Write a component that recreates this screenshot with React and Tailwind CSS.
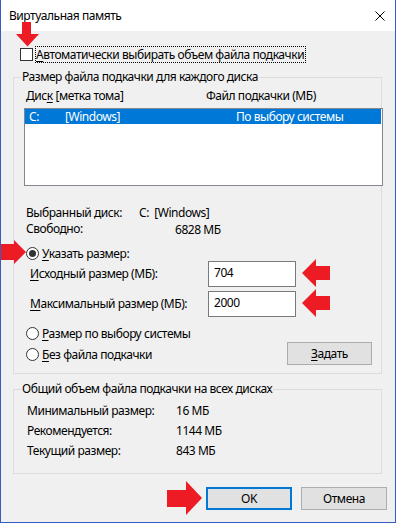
import React from "react";

const font = { fontFamily: '"Noto Sans", "Open Sans", sans-serif' };

function U({ children }) {
  return <span className="underline underline-offset-2">{children}</span>;
}

function Radio({ checked }) {
  return (
    <span className="w-[13px] h-[13px] rounded-full border border-[#333] bg-white flex items-center justify-center shrink-0">
      {checked && <span className="w-[7px] h-[7px] rounded-full bg-[#333]" />}
    </span>
  );
}

function Arrow({ className, points, w, h }) {
  return (
    <svg className={"absolute " + className} width={w} height={h} viewBox={`0 0 ${w} ${h}`}>
      <polygon points={points} fill="#ed1c24" />
    </svg>
  );
}

export default function App() {
  return (
    <div
      className="relative w-[396px] h-[523px] bg-[#f0f0f0] border-l border-r border-b border-[#3b5bc4] text-[12px] tracking-[-0.45px] text-black overflow-hidden"
      style={font}
    >
      {/* Title bar */}
      <div className="h-[31px] bg-white flex items-center justify-between pl-[8px] pr-[10px]">
        <span className="text-[12px]">Виртуальная память</span>
        <svg width="10" height="10" viewBox="0 0 10 10">
          <path d="M0.5 0.5 L9.5 9.5 M9.5 0.5 L0.5 9.5" stroke="#000" strokeWidth="1" />
        </svg>
      </div>

      {/* Checkbox row */}
      <div className="mt-[15px] h-[17px] flex items-center pl-[19px]">
        <span className="w-[13px] h-[13px] border border-[#333] bg-white shrink-0" />
        <span className="ml-[2px] h-[17px] leading-[15px] border border-dotted border-black pr-[1px]">
          <U>А</U>втоматически выбирать объем файла подкачки
        </span>
      </div>

      {/* Fieldset 1 */}
      <fieldset className="mt-[6px] ml-[12px] w-[369px] min-w-0 border border-[#dcdcdc] px-[7px] pb-[8px]">
        <legend className="px-[1px] leading-[16px]">Размер файла подкачки для каждого диска</legend>
        <div className="mt-[3px] h-[16px] leading-[16px] flex pl-[5px]">
          <span className="w-[180px]">Дис<U>к</U> [метка тома]</span>
          <span>Файл подкачки (МБ)</span>
        </div>
        <div className="mt-[4px] ml-[3px] w-[359px] h-[78px] border border-[#828790] bg-white">
          <div className="h-[15px] leading-[15px] bg-[#0078d7] text-white flex pl-[4px] mr-[1px]">
            <span className="w-[36px]">C:</span>
            <span className="w-[171px]">[Windows]</span>
            <span>По выбору системы</span>
          </div>
        </div>
        <div className="mt-[19px] h-[16px] leading-[16px] flex pl-[5px]">
          <span className="w-[113px]">Выбранный диск:</span>
          <span>C:&nbsp;&nbsp;[Windows]</span>
        </div>
        <div className="h-[16px] leading-[16px] flex pl-[5px]">
          <span className="w-[149px]">Свободно:</span>
          <span className="relative top-[1px]">6828 МБ</span>
        </div>
        <div className="mt-[9px] h-[15px] leading-[15px] flex items-center pl-[5px] gap-[3px]">
          <Radio checked />
          <span>
            <U>У</U>казать размер:
          </span>
        </div>
        <div className="h-[26px] flex items-center pl-[9px]">
          <span className="w-[178px]">
            <U>И</U>сходный размер (МБ):
          </span>
          <span className="w-[88px] h-[26px] border border-[#7a7a7a] bg-white pl-[5px] leading-[22px]">704</span>
        </div>
        <div className="mt-[4px] h-[26px] flex items-center pl-[9px]">
          <span className="w-[178px]">
            <U>М</U>аксимальный размер (МБ):
          </span>
          <span className="w-[88px] h-[26px] border border-[#7a7a7a] bg-white pl-[5px] leading-[22px]">2000</span>
        </div>
        <div className="mt-[9px] h-[15px] leading-[15px] flex items-center pl-[5px] gap-[3px]">
          <Radio />
          <span>
            <U>Р</U>азмер по выбору системы
          </span>
        </div>
        <div className="mt-[1px] h-[23px] flex items-center justify-between pl-[5px] pr-[2px]">
          <div className="flex items-center gap-[3px] relative top-[1px]">
            <Radio />
            <span>
              <U>Б</U>ез файла подкачки
            </span>
          </div>
          <button className="w-[85px] h-[23px] bg-[#e1e1e1] border border-[#adadad] flex items-center justify-center">
            <span>
              <U>З</U>адать
            </span>
          </button>
        </div>
      </fieldset>

      {/* Fieldset 2 */}
      <fieldset className="mt-[7px] ml-[12px] w-[369px] min-w-0 border border-[#dcdcdc] px-[7px] pb-[12px]">
        <legend className="px-[1px] leading-[16px]">Общий объем файла подкачки на всех дисках</legend>
        <div className="mt-[4px] flex flex-col pl-[6px]">
          <div className="h-[20px] leading-[20px] flex">
            <span className="w-[149px]">Минимальный размер:</span>
            <span>16 МБ</span>
          </div>
          <div className="h-[20px] leading-[20px] flex">
            <span className="w-[149px]">Рекомендуется:</span>
            <span>1144 МБ</span>
          </div>
          <div className="h-[20px] leading-[20px] flex">
            <span className="w-[149px]">Текущий размер:</span>
            <span>843 МБ</span>
          </div>
        </div>
      </fieldset>

      {/* Bottom buttons */}
      <div className="mt-[13px] h-[23px] flex justify-end gap-[9px] pr-[8px]">
        <button className="w-[86px] h-[23px] bg-[#e1e1e1] border-2 border-[#0078d7] flex items-center justify-center">
          OK
        </button>
        <button className="w-[86px] h-[23px] bg-[#e1e1e1] border border-[#adadad] flex items-center justify-center">
          Отмена
        </button>
      </div>

      {/* Red annotation arrows */}
      <Arrow className="left-[14px] top-[22px]" w={25} h={25} points="7,0 16,0 16,12 24,12 12.5,24.5 1,12 7,12" />
      <Arrow className="left-[-1px] top-[240px]" w={26} h={24} points="0,4 14,4 14,0 26,12 14,24 14,20 0,20" />
      <Arrow className="left-[300px] top-[259px]" w={29} h={28} points="29,7 15,7 15,0 1,14 15,28 15,21 29,21" />
      <Arrow className="left-[300px] top-[289px]" w={29} h={28} points="29,7 15,7 15,0 1,14 15,28 15,21 29,21" />
      <Arrow className="left-[166px] top-[481px]" w={35} h={34} points="0,9 19,9 19,0 35,17 19,34 19,26 0,26" />
    </div>
  );
}
